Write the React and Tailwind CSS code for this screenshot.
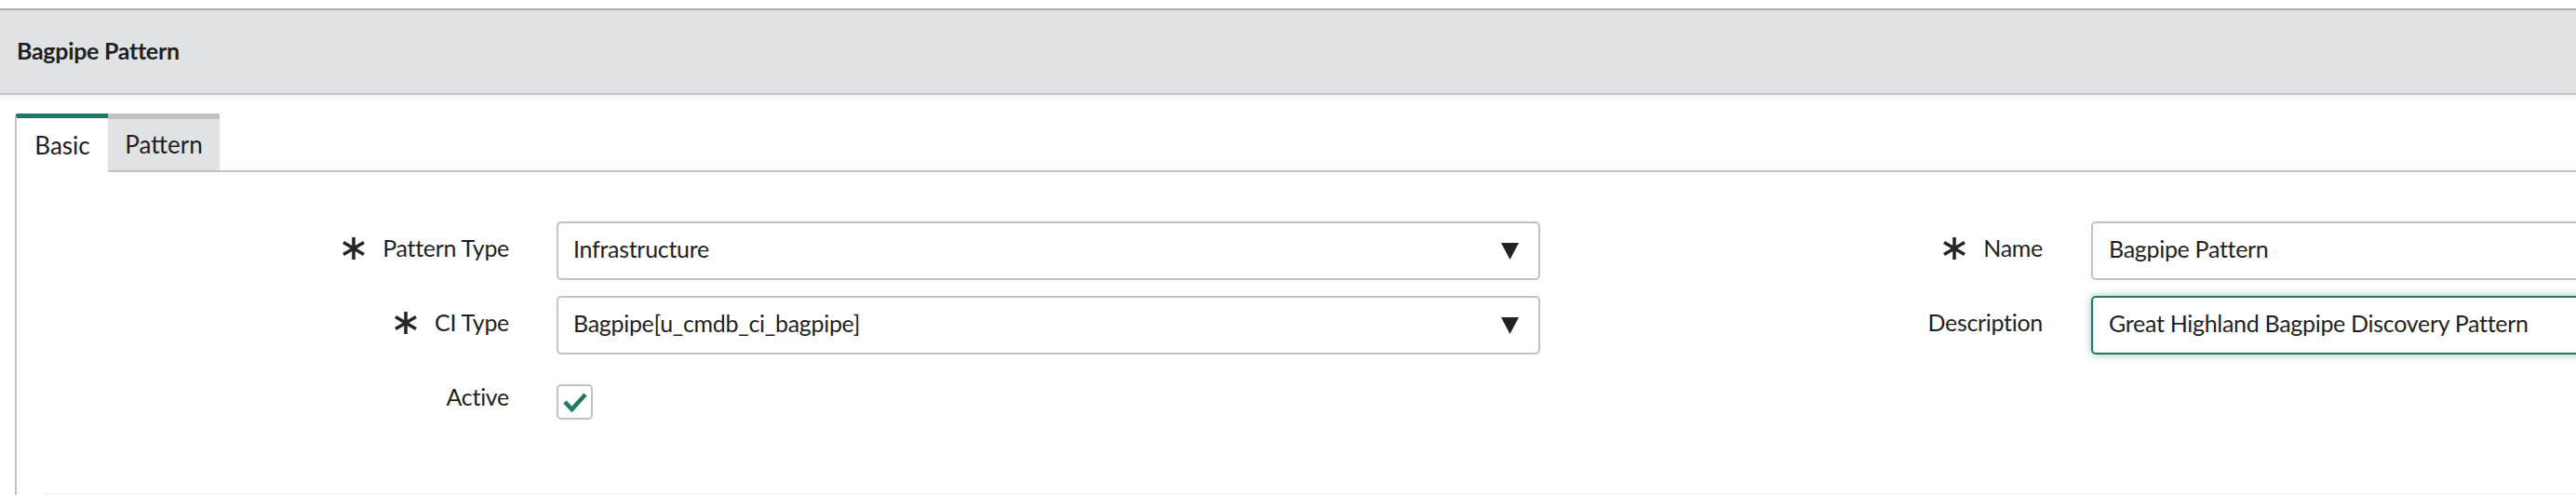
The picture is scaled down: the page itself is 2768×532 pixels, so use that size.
import React from 'react';

const Asterisk = () => (
    <svg width="26" height="24" viewBox="0 0 26 24" className="shrink-0">
        <g stroke="#262626" strokeWidth="3.6" strokeLinecap="butt">
            <line x1="13" y1="0" x2="13" y2="24" />
            <line x1="2" y1="5.5" x2="24" y2="18.5" />
            <line x1="2" y1="18.5" x2="24" y2="5.5" />
        </g>
    </svg>
);

const Caret = () => (
    <svg width="19" height="18" viewBox="0 0 19 18" className="shrink-0">
        <polygon points="0,0 19,0 9.5,18" fill="#222222" />
    </svg>
);

const Label = ({ children, required, width }) => (
    <div className={`${width} shrink-0 pb-[5px] flex items-center justify-end gap-[18px] text-[25px] tracking-[-0.3px]`}>
        {required && <Asterisk />}
        <span>{children}</span>
    </div>
);

const SelectBox = ({ value }) => (
    <div className="w-[1057px] h-[63px] shrink-0 border-2 border-[#c2c2c2] rounded-[5px] pl-[16px] pr-[21px] flex items-center justify-between text-[25px] tracking-[-0.3px]">
        <span className="pb-[4px]">{value}</span>
        <Caret />
    </div>
);

const TextBox = ({ value, focused }) => (
    <div
        className={
            focused
                ? 'w-[700px] h-[63px] shrink-0 border-2 border-[#1f7a64] rounded-[5px] pl-[17px] pb-[4px] flex items-center text-[25px] tracking-[-0.3px] shadow-[0_0_9px_rgba(31,122,100,0.45)]'
                : 'w-[700px] h-[63px] shrink-0 border-2 border-[#c2c2c2] rounded-[5px] pl-[17px] pb-[4px] flex items-center text-[25px] tracking-[-0.3px]'
        }
    >
        {value}
    </div>
);

export default function App() {
    return (
        <div className="w-[2768px] h-[532px] bg-white overflow-hidden text-[#1f1f1f] font-['Lato','Open_Sans',sans-serif]">
            <div className="h-[9px]" />
            {/* form header */}
            <div className="h-[93px] bg-[#dfe3e6] border-t-2 border-b-2 border-t-[#aaacae] border-b-[#c2c4c6] flex items-center pl-[18px] pb-[2px] shadow-[0_4px_6px_rgba(0,0,0,0.05)]">
                <span className="text-[25px] font-bold tracking-[-0.3px]">Bagpipe Pattern</span>
            </div>

            {/* tabs */}
            <div className="mt-[20px] pl-[16px] flex h-[63px]">
                <div className="w-[100px] bg-white border-t-[5px] border-t-[#1f7a64] border-l-2 border-l-[#c2c2c2] rounded-tl-[4px] flex items-center justify-center text-[26px]">
                    Basic
                </div>
                <div className="w-[120px] bg-[#dfe3e6] border-t-[6px] border-t-[#c2c2c2] border-b-2 border-b-[#c2c2c2] flex items-center justify-center text-[26px]">
                    Pattern
                </div>
                <div className="flex-1 border-b-2 border-b-[#c2c2c2]" />
            </div>

            {/* tab panel */}
            <div className="ml-[16px] h-[347px] border-l-2 border-l-[#c2c2c2] flex flex-col">
                <div className="pt-[53px] flex flex-col gap-[17px]">
                    <div className="flex items-center h-[63px]">
                        <Label required width="w-[529px]">Pattern Type</Label>
                        <div className="ml-[51px]"><SelectBox value="Infrastructure" /></div>
                        <Label required width="w-[540px]">Name</Label>
                        <div className="ml-[52px]"><TextBox value="Bagpipe Pattern" /></div>
                    </div>
                    <div className="flex items-center h-[63px]">
                        <Label required width="w-[529px]">CI Type</Label>
                        <div className="ml-[51px]"><SelectBox value="Bagpipe[u_cmdb_ci_bagpipe]" /></div>
                        <Label width="w-[540px]">Description</Label>
                        <div className="ml-[52px]"><TextBox value="Great Highland Bagpipe Discovery Pattern" focused /></div>
                    </div>
                    <div className="flex items-center h-[63px]">
                        <Label width="w-[529px]">Active</Label>
                        <div className="ml-[51px] mt-[5px] w-[39px] h-[38px] border-2 border-[#c2c2c2] rounded-[5px] flex items-center justify-center">
                            <svg width="26" height="22" viewBox="0 0 26 22">
                                <polyline points="2,11 9.5,19 24,3" fill="none" stroke="#1f7a64" strokeWidth="4.6" />
                            </svg>
                        </div>
                    </div>
                </div>
                <div className="mt-auto mb-[1px] ml-[29px] h-px bg-[#eeeeee]" />
            </div>
        </div>
    );
}
